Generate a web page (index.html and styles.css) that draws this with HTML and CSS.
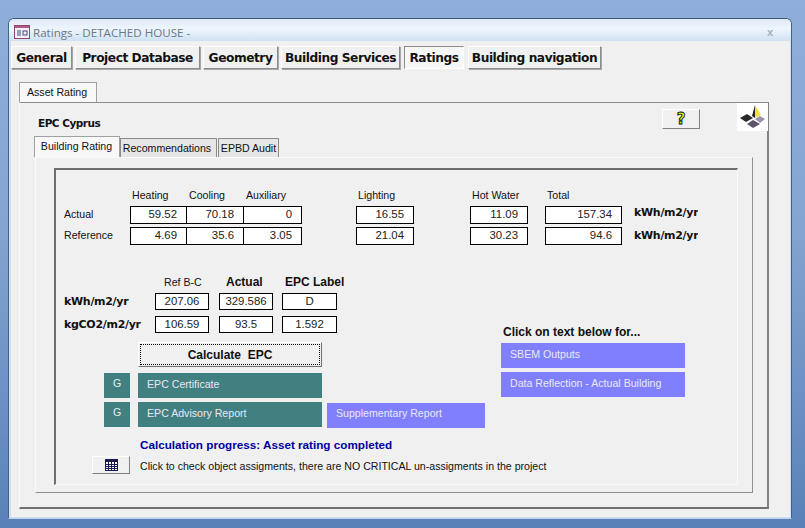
FILE: index.html
```html
<!DOCTYPE html>
<html lang="en">
<head>
    <meta charset="UTF-8">
    <title>Ratings - DETACHED HOUSE -</title>
    <link rel="stylesheet" href="styles.css">
</head>
<body>
    <div class="window">
        <div class="titlebar">
            <svg class="app-icon" width="16" height="14" viewBox="0 0 16 14">
                <rect x="0.5" y="0.5" width="15" height="13" fill="#f4f0f4" stroke="#8a4a70"/>
                <rect x="1" y="1" width="14" height="2" fill="#b05a88"/>
                <path d="M3 6h4M3 8h4M3 10h4" stroke="#3a4a8a"/>
                <rect x="9" y="6" width="4" height="4" fill="none" stroke="#3a4a8a"/>
            </svg>
            <span class="title">Ratings - DETACHED HOUSE -</span>
            <span class="close">x</span>
        </div>

        <div class="client">
            <!-- Top navigation -->
            <div class="nav">
                <button class="nav-btn w-general">General</button>
                <button class="nav-btn w-project">Project Database</button>
                <button class="nav-btn w-geometry">Geometry</button>
                <button class="nav-btn w-services">Building Services</button>
                <button class="nav-btn w-ratings active">Ratings</button>
                <button class="nav-btn w-navigation">Building navigation</button>
            </div>

            <div class="tab asset-tab">Asset Rating</div>
            <div class="asset-panel">
                <div class="asset-head">
                    <span class="epc-title">EPC Cyprus</span>
                    <button class="help-btn"><span class="help-mark">?</span></button>
                    <div class="logo">
                        <svg width="31" height="28" viewBox="0 0 31 28">
                            <polygon points="18,2 15,13 18,15" fill="#2a2418"/>
                            <polygon points="18,2 18,15 24,12" fill="#efe04a"/>
                            <polygon points="3,15 10,11 16,15 9,19" fill="#2c2830"/>
                            <polygon points="18,16 23,13 28,16 23,20" fill="#9a94aa"/>
                            <polygon points="10,21 16,17 23,21 16,25" fill="#5f5468"/>
                        </svg>
                    </div>
                </div>

                <div class="subtabs">
                    <div class="tab subtab-current">Building Rating</div>
                    <div class="tab subtab w-rec">Recommendations</div>
                    <div class="tab subtab w-audit">EPBD Audit</div>
                </div>

                <div class="rating-panel">
                    <div class="sunken">
                        <!-- Energy use by end use -->
                        <div class="energy-grid">
                            <span></span>
                            <span class="col-head">Heating</span>
                            <span class="col-head">Cooling</span>
                            <span class="col-head">Auxiliary</span>
                            <span></span>
                            <span class="col-head">Lighting</span>
                            <span></span>
                            <span class="col-head">Hot Water</span>
                            <span></span>
                            <span class="col-head">Total</span>
                            <span></span>
                            <span></span>

                            <span class="row-label">Actual</span>
                            <span class="val">59.52</span>
                            <span class="val join">70.18</span>
                            <span class="val join">0</span>
                            <span></span>
                            <span class="val">16.55</span>
                            <span></span>
                            <span class="val">11.09</span>
                            <span></span>
                            <span class="val">157.34</span>
                            <span></span>
                            <span class="unit unit-top">kWh/m2/yr</span>

                            <span class="row-label">Reference</span>
                            <span class="val">4.69</span>
                            <span class="val join">35.6</span>
                            <span class="val join">3.05</span>
                            <span></span>
                            <span class="val">21.04</span>
                            <span></span>
                            <span class="val">30.23</span>
                            <span></span>
                            <span class="val">94.6</span>
                            <span></span>
                            <span class="unit">kWh/m2/yr</span>
                        </div>

                        <div class="lower">
                            <div class="lower-left">
                                <div class="label-grid">
                                    <span></span>
                                    <span class="col-mid head-ref">Ref B-C</span>
                                    <span class="col-mid head-actual bold">Actual</span>
                                    <span class="col-mid head-epc bold">EPC Label</span>

                                    <span class="unit">kWh/m2/yr</span>
                                    <span class="val center">207.06</span>
                                    <span class="val center">329.586</span>
                                    <span class="val center epc-val">D</span>

                                    <span class="unit">kgCO2/m2/yr</span>
                                    <span class="val center">106.59</span>
                                    <span class="val center">93.5</span>
                                    <span class="val center epc-val">1.592</span>
                                </div>

                                <button class="calc-btn"><span class="calc-focus">Calculate&nbsp; EPC</span></button>

                                <div class="report-row first">
                                    <span class="g-box">G</span>
                                    <span class="report teal">EPC Certificate</span>
                                </div>
                                <div class="report-row">
                                    <span class="g-box">G</span>
                                    <span class="report teal">EPC Advisory Report</span>
                                    <span class="report purple supplementary">Supplementary Report</span>
                                </div>
                            </div>

                            <div class="lower-right">
                                <div class="click-note">Click on text below for...</div>
                                <span class="report purple wide">SBEM Outputs</span>
                                <span class="report purple wide">Data Reflection - Actual Building</span>
                            </div>
                        </div>

                        <div class="progress">Calculation progress: Asset rating completed</div>

                        <div class="check-row">
                            <button class="check-btn">
                                <svg width="13" height="12" viewBox="0 0 13 12">
                                    <rect x="0.5" y="0.5" width="12" height="11" fill="#fff" stroke="#1a1a50"/>
                                    <rect x="1" y="1" width="11" height="2" fill="#1a1a50"/>
                                    <path d="M1 5.500h11M1 7.500h11M1 9.500h11M3.500 3v8M6.500 3v8M9.500 3v8" stroke="#1a1a50" stroke-width="1"/>
                                </svg>
                            </button>
                            <span class="check-text">Click to check object assigments, there are NO CRITICAL un-assigments in the project</span>
                        </div>
                    </div>
                </div>
            </div>
        </div>
    </div>
</body>
</html>
```

FILE: styles.css
```css
* {
    box-sizing: border-box;
}
html, body {
    height: 100%;
}
body {
    margin: 0;
    overflow: hidden;
    font-family: "Liberation Sans", Arial, sans-serif;
    font-size: 10.6px;
    color: #111;
    background: linear-gradient(#8fafda, #86a6d2 40%, #5a82b8);
    padding: 18px 0 0 8px;
}
button {
    font-family: inherit;
    padding: 0;
    cursor: pointer;
}

/* Window frame */
.window {
    width: 784px;
    height: 501px;
    border: 1px solid #42628a;
    border-bottom-color: #b8d0ea;
    border-top-color: #3a5878;
    border-radius: 6px 6px 0 0;
    background: #cfe0f3;
}
.titlebar {
    height: 22px;
    display: flex;
    align-items: center;
    padding: 4px 18px 0 5px;
    background: linear-gradient(#dfeaf7, #eef5fc 45%, #cfe1f3);
    border-radius: 5px 5px 0 0;
}
.app-icon {
    flex: none;
}
.title {
    margin-left: 3px;
    font-family: "Open Sans", sans-serif;
    font-size: 11.6px;
    color: #6a7888;
}
.close {
    margin-left: auto;
    color: #a3b0be;
    font-size: 11px;
    font-weight: bold;
}
.client {
    margin: 0 1px 0 2px;
    height: 476px;
    background: #f0f0f0;
    padding-top: 5px;
}

/* Navigation buttons */
.nav {
    display: flex;
    gap: 3px;
}
.nav-btn {
    height: 23px;
    font-size: 12.2px;
    font-weight: bold;
    font-family: "DejaVu Sans", sans-serif;
    letter-spacing: -0.45px;
    white-space: nowrap;
    color: #111;
    background: #f0f0f0;
    border: 1px solid;
    border-color: #fff #8c8c8c #8c8c8c #fff;
    box-shadow: 1px 1px 0 #a8a8a8;
}
.nav-btn.active {
    background: #f7f7f7;
    border-color: #8c8c8c #fff #fff #8c8c8c;
    box-shadow: none;
    margin-left: 1px;
}
.w-general { width: 61px; }
.w-project { width: 125px; }
.w-geometry { width: 75px; }
.w-services { width: 119px; }
.w-ratings { width: 60px; }
.w-navigation { width: 133px; margin-left: 1px; }

/* Tabs */
.tab {
    text-align: center;
}
.asset-tab {
    width: 78px;
    height: 20px;
    margin: 13px 0 0 8px;
    padding: 3px 2px 0 0;
    background: #f8f8f8;
    border: 1px solid #a0a0a0;
    border-bottom: none;
}
.asset-panel {
    width: 750px;
    height: 407px;
    margin-left: 8px;
    border-top: 1px solid #8c8c8c;
    border-right: 2px solid #808080;
    border-bottom: 2px solid #707070;
    border-left: 1px solid #fafafa;
}
.asset-head {
    display: flex;
    height: 33px;
    padding-left: 18px;
}
.epc-title {
    font-weight: bold;
    font-size: 10.5px;
    font-family: "DejaVu Sans", sans-serif;
    letter-spacing: -0.5px;
    margin-top: 14px;
}
.help-btn {
    width: 38px;
    height: 20px;
    margin: 6px 0 0 auto;
    background: #f0f0f0;
    border: 1px solid;
    border-color: #fff #808080 #808080 #fff;
}
.help-mark {
    font-family: "DejaVu Sans", sans-serif;
    font-size: 15px;
    line-height: 16px;
    font-weight: bold;
    color: #f5f000;
    -webkit-text-stroke: 0.8px #000;
}
.logo {
    width: 31px;
    height: 28px;
    margin: 0 -1px 0 37px;
    background: #fff;
}
.subtabs {
    display: flex;
    align-items: flex-end;
    height: 21px;
    margin-left: 14px;
}
.subtab-current {
    width: 86px;
    height: 21px;
    padding: 3px 1px 0 0;
    background: #f8f8f8;
    border: 1px solid #a0a0a0;
    border-bottom: none;
}
.subtab {
    height: 19px;
    padding-top: 3px;
    margin-left: 1px;
    background: #e6e6e6;
    border: 1px solid #8c8c8c;
    border-bottom: none;
}
.w-rec { width: 97px; margin-left: 0; padding-right: 3px; }
.w-audit { width: 61px; }

.rating-panel {
    width: 718px;
    height: 336px;
    margin-left: 15px;
    padding: 10px 14px 8px 18px;
    border: 1px solid;
    border-color: #fafafa #909090 #909090 #fafafa;
}
.sunken {
    width: 684px;
    height: 317px;
    border: 1px solid;
    border-width: 2px 1px 1px 2px;
    border-color: #6e6e6e #fafafa #fafafa #6e6e6e;
    padding-top: 13px;
}

/* Values */
.energy-grid {
    display: grid;
    grid-template-columns: 75px 57px 57px 58px 54px 58px 56px 58px 17px 77px 12px 64px;
    grid-template-rows: 20px 18px 18px;
    row-gap: 3px;
    margin-left: -1px;
}
.col-head {
    padding-left: 2px;
    line-height: 24px;
    white-space: nowrap;
}
.row-label {
    padding-left: 9px;
    line-height: 17px;
}
.val {
    border: 1px solid #000;
    background: #fff;
    text-align: right;
    padding-right: 9px;
    font-size: 11.4px;
    line-height: 15px;
    color: #222;
}
.val.join {
    margin-left: -1px;
}
.val.center {
    width: 54px;
    text-align: center;
    padding-right: 0;
}
.val.epc-val {
    width: 55px;
}
.unit {
    font-family: "DejaVu Sans", sans-serif;
    font-weight: bold;
    font-size: 11px;
    letter-spacing: -0.3px;
    line-height: 17px;
    white-space: nowrap;
    overflow: hidden;
}
.unit-top {
    line-height: 13px;
}
.lower {
    display: flex;
    margin-top: 30px;
}
.lower-left {
    width: 445px;
    flex: none;
}
.label-grid {
    display: grid;
    grid-template-columns: 91px 64px 63px 55px;
    grid-template-rows: 12px 17px 17px;
    row-gap: 6px;
    padding-left: 8px;
}
.col-mid {
    white-space: nowrap;
    line-height: 14px;
}
.head-ref { padding-left: 9px; }
.head-actual { padding-left: 7px; }
.head-epc { padding-left: 3px; }
.bold {
    font-weight: bold;
    font-size: 12px;
}
.calc-btn {
    display: block;
    width: 184px;
    height: 25px;
    margin: 9px 0 0 82px;
    padding: 1px;
    background: #f0f0f0;
    border: 1px solid;
    border-color: #fff #707070 #707070 #fff;
    font-weight: bold;
    font-size: 12px;
    color: #111;
}
.calc-focus {
    display: block;
    height: 100%;
    line-height: 20px;
    border: 1px dotted #000;
}
.report-row {
    display: flex;
    margin: 4px 0 0 48px;
}
.report-row.first {
    margin-top: 6px;
}
.g-box {
    width: 26px;
    height: 25px;
    padding-top: 4px;
    text-align: center;
    background: #408080;
    color: #e8f0f0;
}
.report {
    display: block;
    height: 25px;
    padding: 5px 0 0 9px;
    color: #e8e8f4;
}
.teal {
    width: 184px;
    margin-left: 8px;
    background: #408080;
}
.purple {
    background: #8080ff;
}
.supplementary {
    width: 158px;
    margin: 1px 0 -1px 5px;
    padding-top: 4px;
}
.wide {
    width: 184px;
    margin-bottom: 4px;
}
.lower-right {
    margin-top: 50px;
}
.click-note {
    font-weight: bold;
    font-size: 12px;
    line-height: 14px;
    margin: 0 0 4px 2px;
}

.progress {
    margin: 11px 0 0 84px;
    color: #0000a0;
    font-weight: bold;
    font-size: 11.7px;
    line-height: 14px;
}
.check-row {
    display: flex;
    align-items: center;
    margin: 4px 0 0 36px;
}
.check-btn {
    width: 38px;
    height: 18px;
    display: flex;
    align-items: center;
    justify-content: center;
    background: #f0f0f0;
    border: 1px solid;
    border-color: #fff #808080 #808080 #fff;
}
.check-text {
    margin-left: 10px;
    padding-top: 2px;
}
```
